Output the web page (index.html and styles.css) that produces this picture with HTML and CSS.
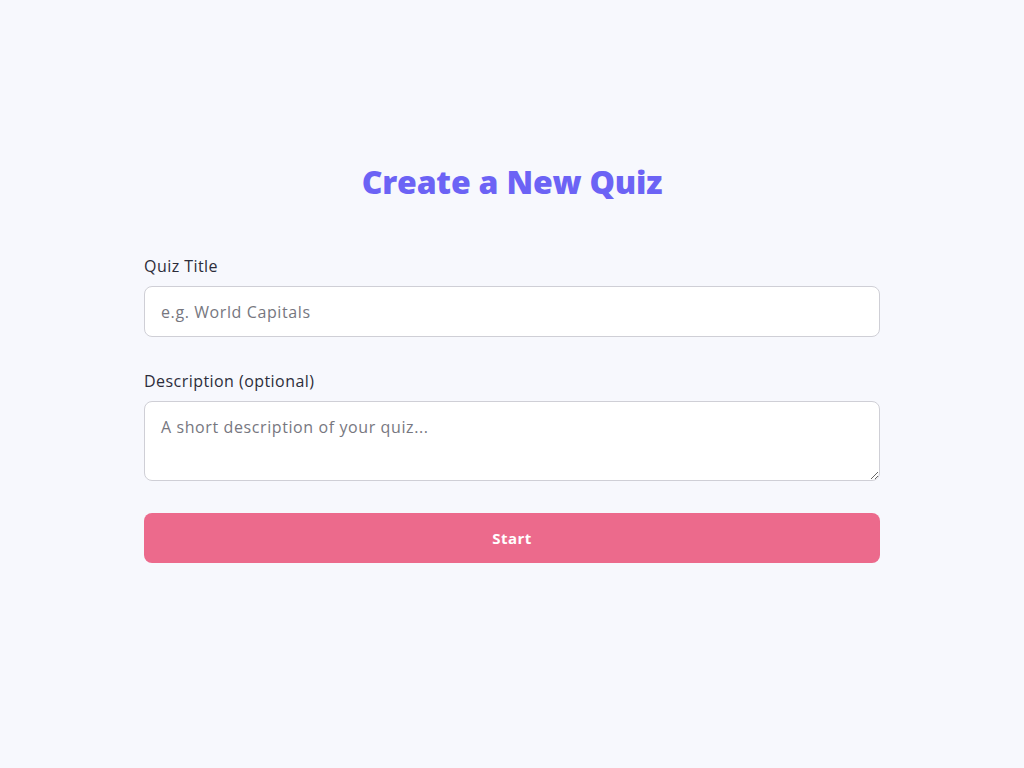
FILE: index.html
```html
<!DOCTYPE html>
<html lang="en">
<head>
<meta charset="utf-8">
<title>Create a New Quiz</title>
<link rel="stylesheet" href="styles.css">
</head>
<body>
<main class="page">
  <h1 class="title">Create a New Quiz</h1>
  <form class="form">
    <div class="field">
      <label class="label" for="qt">Quiz Title</label>
      <input class="input" id="qt" type="text" placeholder="e.g. World Capitals">
    </div>
    <div class="field field-desc">
      <label class="label" for="qd">Description (optional)</label>
      <textarea class="textarea" id="qd" placeholder="A short description of your quiz..."></textarea>
    </div>
    <button class="btn" type="button">Start</button>
  </form>
</main>
</body>
</html>
```
FILE: styles.css
```css
html, body {
  margin: 0;
  padding: 0;
  background: #f7f8fd;
}
body {
  font-family: "Open Sans", "DejaVu Sans", sans-serif;
  color: #2d2d3a;
}
.page {
  width: 736px;
  margin: 0 auto;
  padding-top: 158px;
}
.title {
  margin: 0 0 49px;
  text-align: center;
  font-size: 32px;
  line-height: 48px;
  font-weight: 800;
  color: #6c63f5;
  letter-spacing: -0.2px;
}
.form {
  display: flex;
  flex-direction: column;
}
.field {
  display: flex;
  flex-direction: column;
  margin-bottom: 33px;
}
.field-desc {
  margin-bottom: 32px;
}
.label {
  font-size: 16px;
  line-height: 22px;
  letter-spacing: 0.45px;
  margin-bottom: 9px;
  color: #2d2d3a;
}
.input, .textarea {
  box-sizing: border-box;
  width: 100%;
  border: 1px solid #cfcfd6;
  border-radius: 8px;
  background: #fff;
  padding: 0 16px;
  font-family: inherit;
  font-size: 16px;
  letter-spacing: 0.6px;
  color: #333;
  outline: none;
}
.input {
  height: 51px;
}
.textarea {
  height: 80px;
  padding-top: 14px;
  resize: vertical;
  display: block;
}
.input::placeholder, .textarea::placeholder {
  color: #77777f;
}
.btn {
  height: 50px;
  border: none;
  border-radius: 8px;
  background: #ec6a8c;
  color: #fff;
  font-family: inherit;
  font-weight: 700;
  font-size: 15px;
  letter-spacing: 0.5px;
  cursor: pointer;
}
```
